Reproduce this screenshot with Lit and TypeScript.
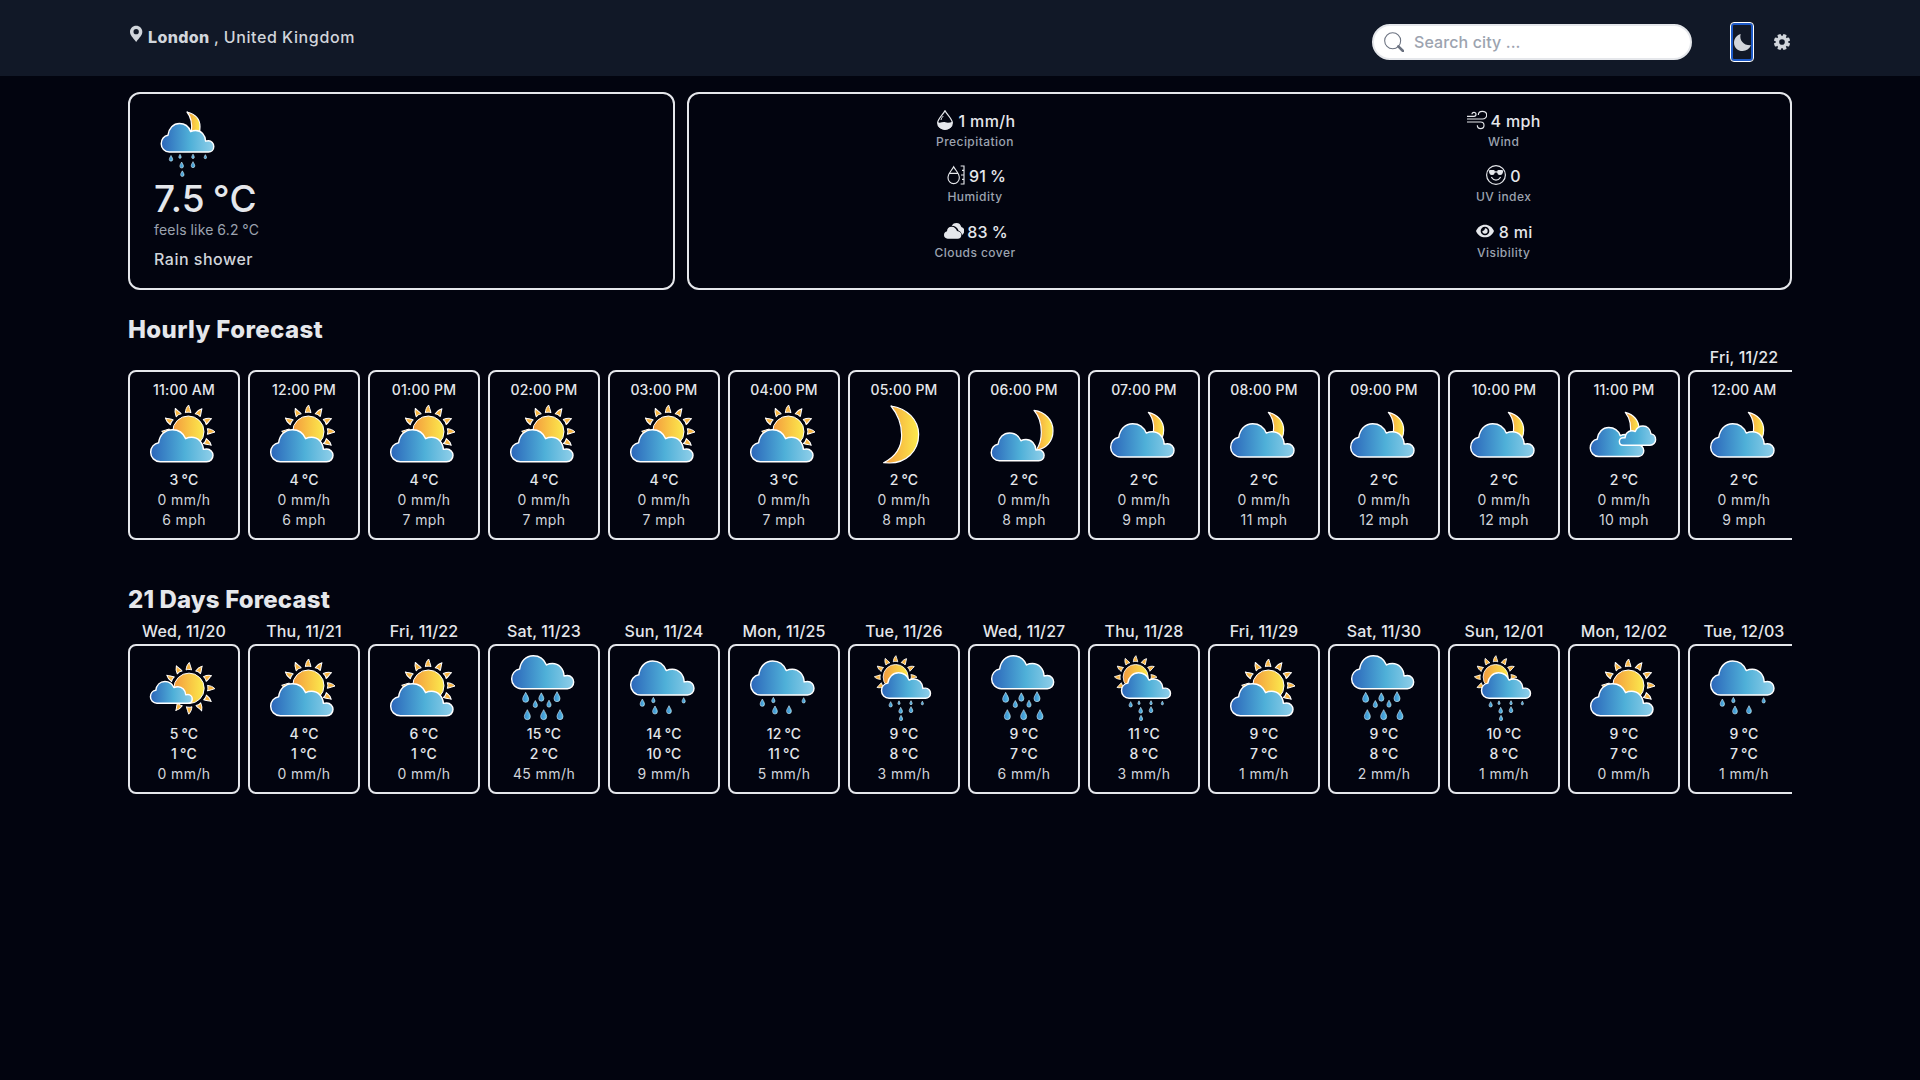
import { LitElement, html, svg, css, nothing } from "lit";
import { customElement, property } from "lit/decorators.js";
import { classMap } from "lit/directives/class-map.js";

type Kind =
  | "suncloud" | "mostlysun" | "moon" | "moonsmall" | "mooncloud" | "moonclouds"
  | "rain" | "lightrain" | "sunshower" | "nightshower";

const CLOUD =
  "M31 98C14 98 2 85 2 70C2 55 12 43 26 41C29 18 45 2 67 2C85 2 100 12 107 29C113 26 119 25 125 25C144 25 159 40 160 61C163 60 167 60 170 60C181 60 189 69 189 79C189 90 181 98 170 98Z";

// Cloud stretched to the box x, y, w, h; flipped puts the tall bump on the right.
const cloud = (x: number, y: number, w: number, h: number, flip = false) => svg`
  <g transform=${flip ? `translate(${x + w} ${y}) scale(${-w / 191} ${h / 100})` : `translate(${x} ${y}) scale(${w / 191} ${h / 100})`}>
    <path d=${CLOUD} fill=${flip ? "url(#skyflip)" : "url(#sky)"} stroke="#fff" stroke-width=${4.4 / Math.sqrt((w / 191) * (h / 100))} stroke-linejoin="round"/>
  </g>`;

const sun = (x: number, y: number, s: number, skip: number[] = []) => svg`
  <g transform=${`translate(${x} ${y}) scale(${s})`}>
    ${[0, 1, 2, 3, 4, 5, 6, 7, 8, 9, 10, 11].filter((i) => !skip.includes(i)).map((i) => svg`
      <path transform=${`rotate(${i * 30})`} d="M-9 -57C-8 -66 -6 -73 1 -80C2 -72 7 -66 8 -57C3 -59 -4 -59 -9 -57Z"
        fill="#f8b541" stroke="#fff" stroke-width="3" stroke-linejoin="round"/>`)}
    <circle r="47" fill="url(#sun)" stroke="#fff" stroke-width="3"/>
  </g>`;

const crescent = (d: string) =>
  svg`<path d=${d} fill="url(#sun)" stroke="#fff" stroke-width="3.6" stroke-linejoin="round"/>`;

const drops = (list: number[][]) => list.map(([x, y, h]) => svg`
  <path transform=${`translate(${x} ${y}) scale(${h / 30})`} d="M0 -15C4 -7 9 -1 9 6A9 9 0 0 1 -9 6C-9 -1 -4 -7 0 -15Z"
    fill="url(#drop)" stroke="#d9f1fb" stroke-width=${(1.8 * 30) / h}/>`);

const pictures: Record<Kind, () => unknown> = {
  suncloud: () => [sun(118, 95, 1, [6, 7, 8, 5]), cloud(3, 87, 191, 100)],
  mostlysun: () => [sun(120, 103, 0.97, [8, 9]), cloud(3, 81, 128, 68)],
  moon: () => crescent("M66 18C115 25 149 60 149 103C149 155 110 190 60 189L44 188C80 170 98 140 98 105C98 70 88 45 66 18Z"),
  moonsmall: () => [
    crescent("M135 31C168 35 192 60 192 92C192 124 172 146 142 150C154 132 157 116 157 97C157 70 150 48 135 31Z"),
    cloud(5, 97, 162, 87),
  ],
  mooncloud: () => [
    crescent("M118 37C146 43 164 64 164 90C164 100 163 104 160 112L128 112C138 90 136 58 118 37Z"),
    cloud(3, 69, 194, 104),
  ],
  moonclouds: () => [
    crescent("M109 37C134 43 150 62 150 86L150 110L122 110C128 84 124 56 109 37Z"),
    cloud(2, 81, 164, 90), cloud(90, 77, 111, 60, true),
  ],
  rain: () => [
    cloud(6, 3, 190, 103),
    drops([[50, 130, 30], [97, 129, 25], [144, 128, 30], [79, 150, 21], [120, 149, 21], [55, 182, 30], [104, 182, 30], [153, 182, 30]]),
  ],
  lightrain: () => [
    cloud(3, 19, 194, 106),
    drops([[40, 146, 22], [73, 138, 16], [78, 168, 24], [120, 167, 24], [164, 139, 16]]),
  ],
  sunshower: () => [
    sun(80, 69, 0.8, [4, 5, 6, 7]), cloud(36, 55, 150, 79),
    drops([[65, 151, 16], [90, 146, 11], [95, 169, 18], [96, 192, 16], [126, 146, 12], [126, 167, 18], [160, 147, 11]]),
  ],
  nightshower: () => [
    crescent("M99 6C124 12 138 28 138 50L137 66L112 66C115 44 112 22 99 6Z"),
    cloud(20, 39, 161, 89),
    drops([[51, 145, 17], [78, 139, 12], [83, 165, 18], [85, 191, 17], [117, 139, 13], [117, 164, 18], [154, 140, 12]]),
  ],
};

@customElement("weather-icon")
export class WeatherIcon extends LitElement {
  @property() kind: Kind = "suncloud";
  static styles = css`
    :host { display: block; width: 70px; height: 70px; }
    svg { display: block; overflow: visible; }
  `;
  render() {
    return html`<svg width="70" height="70" viewBox="0 0 210 210">
      <defs>
        <linearGradient id="sky"><stop offset="0" stop-color="#2c66ba"/><stop offset=".55" stop-color="#4fb0d8"/><stop offset="1" stop-color="#90cfe9"/></linearGradient>
        <linearGradient id="skyflip"><stop offset="0" stop-color="#8accea"/><stop offset=".5" stop-color="#4fb0d8"/><stop offset="1" stop-color="#3f93cc"/></linearGradient>
        <linearGradient id="sun"><stop offset="0" stop-color="#f39a3e"/><stop offset=".6" stop-color="#f9cb45"/><stop offset="1" stop-color="#fbea4e"/></linearGradient>
        <linearGradient id="drop"><stop offset="0" stop-color="#3186cb"/><stop offset="1" stop-color="#5cc0e6"/></linearGradient>
      </defs>
      ${pictures[this.kind]()}
    </svg>`;
  }
}

const glyphs = {
  precip: svg`
    <path d="M30 2C24 14 8 26 8 38A22 20 0 0 0 52 38C52 26 36 14 30 2Z" fill="none" stroke="currentColor" stroke-width="3.6"/>
    <path d="M8 36C15 42 23 34 31 37C38 39 46 38 52 35C53 50 43 59 30 59C17 59 7 50 8 36Z" fill="currentColor"/>
    <path d="M25 18C21 22 19 25 18 30" fill="none" stroke="currentColor" stroke-width="3"/>`,
  humidity: svg`
    <g fill="none" stroke="currentColor" stroke-width="3.4">
      <path d="M23 5C17 17 6 25 6 38A17 18 0 0 0 40 38C40 25 29 17 23 5ZM10 25H36"/>
      <path d="M44 3H54V57H44M48 16H54M45 30H54M48 43H54"/>
    </g>`,
  clouds: svg`
    <path d="M23 14C27 8 31 6 37 6C46 6 50 11 52 18C58 20 61 24 61 29C61 35 58 39 54 42C53 34 49 31 44 29C40 19 33 14 23 14Z" fill="currentColor"/>
    <path d="M11 53C4 53 0 48 0 42C0 36 4 32 9 31C9 23 14 17 23 17C31 17 36 22 39 30C47 31 52 36 52 42C52 49 48 53 41 53Z" fill="currentColor"/>`,
  wind: svg`
    <g fill="none" stroke="currentColor" stroke-width="3.5">
      <path d="M0 19H21A6 6 0 1 0 15 13"/>
      <path d="M0 27H46C54 27 59 21 59 15C59 8 53 4 46 4C39 4 34 8 34 15"/>
      <path d="M0 36H41C47 36 51 40 51 46C51 52 47 56 41 56C35 56 31 52 31 46"/>
    </g>`,
  uv: svg`
    <circle cx="30" cy="30" r="28.2" fill="none" stroke="currentColor" stroke-width="3.6"/>
    <path transform="scale(3.75)" fill="currentColor" d="M4.968 9.75a.5.5 0 1 0-.866.5A4.498 4.498 0 0 0 8 12.5a4.5 4.5 0 0 0 3.898-2.25.5.5 0 1 0-.866-.5A3.498 3.498 0 0 1 8 11.5a3.498 3.498 0 0 1-3.032-1.75zM7 5.116V5a1 1 0 0 0-1-1H3.28a1 1 0 0 0-.97 1.243l.311 1.242A2 2 0 0 0 4.561 8H5a2 2 0 0 0 1.994-1.839A2.99 2.99 0 0 1 8 6c.393 0 .74.064 1.006.161A2 2 0 0 0 11 8h.438a2 2 0 0 0 1.94-1.515l.311-1.242A1 1 0 0 0 12.72 4H10a1 1 0 0 0-1 1v.116A4.22 4.22 0 0 0 8 5c-.35 0-.69.04-1 .116z"/>`,
  eye: svg`
    <path fill-rule="evenodd" fill="currentColor" d="M3 30C8 18 18 11 30 11C42 11 52 18 57 30C52 42 42 49 30 49C18 49 8 42 3 30ZM30 17A13 13 0 1 0 30 43A13 13 0 1 0 30 17Z"/>
    <path fill="currentColor" d="M30 22A8 8 0 1 1 22 30C26 30 30 27 30 22Z"/>`,
};

type Stat = [keyof typeof glyphs, string, string];
const stats: Stat[] = [
  ["precip", "1 mm/h", "Precipitation"], ["wind", "4 mph", "Wind"],
  ["humidity", "91 %", "Humidity"], ["uv", "0", "UV index"],
  ["clouds", "83 %", "Clouds cover"], ["eye", "8 mi", "Visibility"],
];

type Hour = [string, Kind, number, number, string?];
const hours: Hour[] = [
  ["11:00 AM", "suncloud", 3, 6], ["12:00 PM", "suncloud", 4, 6], ["01:00 PM", "suncloud", 4, 7],
  ["02:00 PM", "suncloud", 4, 7], ["03:00 PM", "suncloud", 4, 7], ["04:00 PM", "suncloud", 3, 7],
  ["05:00 PM", "moon", 2, 8], ["06:00 PM", "moonsmall", 2, 8], ["07:00 PM", "mooncloud", 2, 9],
  ["08:00 PM", "mooncloud", 2, 11], ["09:00 PM", "mooncloud", 2, 12], ["10:00 PM", "mooncloud", 2, 12],
  ["11:00 PM", "moonclouds", 2, 10], ["12:00 AM", "mooncloud", 2, 9, "Fri, 11/22"],
];

type Day = [string, Kind, number, number, number];
const days: Day[] = [
  ["Wed, 11/20", "mostlysun", 5, 1, 0], ["Thu, 11/21", "suncloud", 4, 1, 0], ["Fri, 11/22", "suncloud", 6, 1, 0],
  ["Sat, 11/23", "rain", 15, 2, 45], ["Sun, 11/24", "lightrain", 14, 10, 9], ["Mon, 11/25", "lightrain", 12, 11, 5],
  ["Tue, 11/26", "sunshower", 9, 8, 3], ["Wed, 11/27", "rain", 9, 7, 6], ["Thu, 11/28", "sunshower", 11, 8, 3],
  ["Fri, 11/29", "suncloud", 9, 7, 1], ["Sat, 11/30", "rain", 9, 8, 2], ["Sun, 12/01", "sunshower", 10, 8, 1],
  ["Mon, 12/02", "suncloud", 9, 7, 0], ["Tue, 12/03", "lightrain", 9, 7, 1],
];

@customElement("app-root")
export class AppRoot extends LitElement {
  static styles = css`
    :host {
      display: block; box-sizing: border-box; min-height: 100vh; background: #02040f; color: #e5e7eb;
      font: 500 16px/24px Inter, "Liberation Sans", sans-serif; letter-spacing: 0.35px;
    }
    * { box-sizing: border-box; }
    svg { display: block; flex: none; }
    .header { height: 76px; background: #111827; padding: 0 128px; display: flex; justify-content: space-between; color: #d1d5db; }
    .place { display: flex; padding-top: 25px; height: 62px; }
    .place-name { margin-left: 5px; letter-spacing: 0.65px; word-spacing: -0.5px; }
    .place-name b { font-weight: 800; letter-spacing: 0.35px; }
    .tools { display: flex; align-items: center; height: 76px; padding-top: 8px; }
    .search { width: 320px; height: 36px; border: 2px solid #e5e7eb; border-radius: 18px; background: #fff; color: #9ca3af; display: flex; align-items: center; padding-left: 10px; gap: 10px; letter-spacing: 0.1px; }
    .search svg { color: #6b7280; }
    .search span { margin-top: -1px; }
    .toggle { margin-left: 38px; width: 24px; height: 40px; border: 1px solid #fff; border-radius: 4px; box-shadow: inset 0 0 0 2px #1d5ac9; display: flex; align-items: center; justify-content: center; }
    .gear { margin: 0 2px 0 20px; }
    .main { padding: 16px 128px 0; }
    .top { display: grid; grid-template-columns: repeat(3, minmax(0, 1fr)); gap: 12px; height: 198px; }
    .panel { border: 2px solid #e5e7eb; border-radius: 12px; }
    .now { padding: 16px 24px; }
    .temp { font-size: 37px; line-height: 38px; margin-bottom: 2px; font-weight: 450; letter-spacing: 0.2px; word-spacing: -2px; }
    .feels { font-size: 14px; line-height: 20px; font-weight: 400; color: #9ca3af; letter-spacing: 0.2px; word-spacing: -0.5px; }
    .cond { margin-top: 7px; color: #d1d5db; letter-spacing: 0.5px; }
    .stats { grid-column: span 2; display: grid; grid-template-columns: 1fr 1fr; grid-template-rows: 55px 56px 40px; padding: 15px 22px 0; }
    .stat { display: flex; flex-direction: column; align-items: center; }
    .value { display: flex; gap: 4px; height: 24px; letter-spacing: 0.35px; }
    .value.percent { gap: 3px; letter-spacing: 0; padding-left: 2px; }
    .value svg { margin-top: 1px; }
    .label { font-size: 12px; line-height: 18px; color: #9ca3af; letter-spacing: 0.45px; }
    .title { margin: 24px 0 0; font-size: 24px; line-height: 32px; font-weight: 800; letter-spacing: 0.38px; }
    .title-days { margin: 44px 0 4px; letter-spacing: 0.14px; }
    .strip { display: flex; gap: 8px; overflow: hidden; }
    .item { flex: none; width: 112px; text-align: center; }
    .date { line-height: 22px; padding-bottom: 2px; height: 24px; letter-spacing: 0.1px; }
    .card { border: 2px solid #e5e7eb; border-radius: 8px; padding: 8px 0; display: flex; flex-direction: column; align-items: center; font-size: 14px; line-height: 20px; letter-spacing: 0.2px; }
    .deg { word-spacing: -1px; }
    .dim { color: #d1d5db; font-weight: 400; letter-spacing: 0.4px; }
  `;

  render() {
    return html`
      <header class="header">
        <div class="place">
          <svg width="15" height="18" viewBox="0 0 45 54"><path fill="currentColor" fill-rule="evenodd" d="M24.500 2C14 2 6 10 6 20C6 31 14 36 24.500 51C35 36 43 31 43 20C43 10 35 2 24.500 2ZM24.500 12A8 8 0 1 1 24.500 28A8 8 0 1 1 24.500 12Z"/></svg>
          <div class="place-name"><b>London</b> , United Kingdom</div>
        </div>
        <div class="tools">
          <div class="search">
            <svg width="20" height="20" viewBox="0 0 60 60" fill="none" stroke="currentColor"><circle cx="26" cy="26" r="24" stroke-width="3.2"/><path d="M43 43L57 57" stroke-width="8" stroke-linecap="round"/></svg>
            <span>Search city ...</span>
          </div>
          <div class="toggle">
            <svg width="17" height="17" viewBox="0 0 51 51"><path fill="currentColor" d="M20 0C15 18 28 35 51 34C46 45 37 51 26 51C11 51 0 40 0 26C0 14 8 4 20 0Z"/></svg>
          </div>
          <svg class="gear" width="16" height="16" viewBox="0 0 48 48">
            <g fill="currentColor">
              ${[0, 45, 90, 135].map((a) => svg`<rect x="18.500" y="-0.500" width="11" height="49" rx="3" transform=${`rotate(${a + 22.5} 24 24)`}/>`)}
              <circle cx="24" cy="24" r="18.500"/>
            </g>
            <circle cx="24" cy="24" r="8.500" fill="#111827"/>
          </svg>
        </div>
      </header>
      <main class="main">
        <section class="top">
          <div class="panel now">
            <weather-icon .kind=${"nightshower"}></weather-icon>
            <div class="temp">7.5 °C</div>
            <div class="feels">feels like 6.2 °C</div>
            <div class="cond">Rain shower</div>
          </div>
          <div class="panel stats">
            ${stats.map(([g, v, l]) => html`<div class="stat">
              <div class=${classMap({ value: true, percent: v.endsWith("%") })}><svg width="20" height="20" viewBox="0 0 60 60">${glyphs[g]}</svg><span>${v}</span></div>
              <div class="label">${l}</div>
            </div>`)}
          </div>
        </section>
        <h2 class="title">Hourly Forecast</h2>
        <div class="strip">
          ${hours.map(([t, k, c, w, d]) => html`<div class="item">
            <div class="date">${d ?? nothing}</div>
            <div class="card"><div>${t}</div><weather-icon .kind=${k}></weather-icon>
              <div class="deg">${c} °C</div><div class="dim">0 mm/h</div><div class="dim">${w} mph</div></div>
          </div>`)}
        </div>
        <h2 class="title title-days">21 Days Forecast</h2>
        <div class="strip">
          ${days.map(([d, k, hi, lo, mm]) => html`<div class="item">
            <div class="date">${d}</div>
            <div class="card"><weather-icon .kind=${k}></weather-icon>
              <div class="deg">${hi} °C</div><div class="deg">${lo} °C</div><div class="dim">${mm} mm/h</div></div>
          </div>`)}
        </div>
      </main>`;
  }
}
